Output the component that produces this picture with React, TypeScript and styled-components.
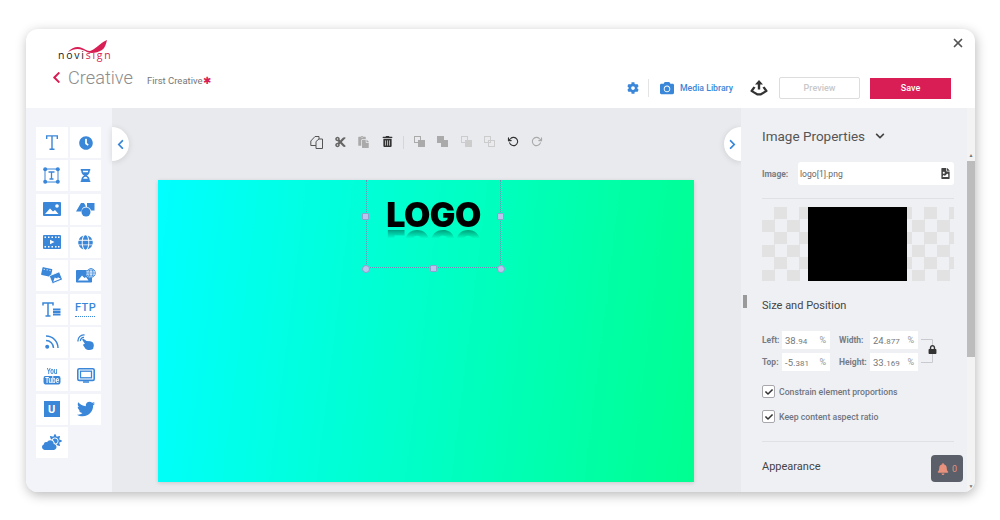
import { createGlobalStyle, styled } from "styled-components";
import {
  FaBell,
  FaCamera,
  FaCheck,
  FaChevronDown,
  FaChevronLeft,
  FaChevronRight,
  FaClock,
  FaCloudSun,
  FaCog,
  FaCut,
  FaFileImage,
  FaGlobe,
  FaHourglassHalf,
  FaLock,
  FaPaste,
  FaTrashAlt,
  FaTwitter,
} from "react-icons/fa";
import { FiRotateCcw, FiRotateCw, FiX } from "react-icons/fi";

const blue = "#3a86d8";

const GlobalStyle = createGlobalStyle`
  html, body {
    margin: 0;
    padding: 0;
    background: #fff;
    font-family: Roboto, "Liberation Sans", sans-serif;
  }
`;

function TextIcon() {
  return (
    <svg width="12" height="15" viewBox="0 0 12 15" fill="none" stroke={blue}>
      <path d="M0.7 4V0.9H11.3V4M6 0.9V14M3.5 14.2H8.5" strokeWidth="1.4" />
    </svg>
  );
}

function TextBoxIcon() {
  return (
    <svg width="17" height="17" viewBox="0 0 17 17" fill="none" stroke={blue}>
      <rect x="2" y="2" width="13" height="13" strokeWidth="1" />
      <path d="M5.5 5H11.5M8.5 5V12M6.5 12H10.5" strokeWidth="1.3" />
      <g fill={blue} stroke="none">
        <circle cx="2.2" cy="2.2" r="2" />
        <circle cx="14.8" cy="2.2" r="2" />
        <circle cx="2.2" cy="14.8" r="2" />
        <circle cx="14.8" cy="14.8" r="2" />
      </g>
    </svg>
  );
}

function PictureIcon() {
  return (
    <svg width="18" height="14" viewBox="0 0 18 14">
      <rect width="18" height="14" rx="1" fill={blue} />
      <path d="M2 12L7 6.5L10 9.5L12 8L15.5 12Z" fill="#fff" />
      <circle cx="14" cy="4" r="1.8" fill="#fff" />
    </svg>
  );
}

function ShapesIcon() {
  return (
    <svg width="19" height="15" viewBox="0 0 19 15" fill={blue}>
      <path d="M0 9.5L5 1H8L10 4.5A5 5 0 0 0 5.5 9.5Z" />
      <circle cx="10" cy="10" r="4.5" />
      <path d="M11 1H18.5V8.5H15.2A6 6 0 0 0 11 4.8Z" />
    </svg>
  );
}

function FilmIcon() {
  return (
    <svg width="18" height="14" viewBox="0 0 18 14">
      <rect width="18" height="14" rx="1" fill={blue} />
      <path
        d="M1.5 1.5H3V3H1.5ZM5 1.5H6.5V3H5ZM8.5 1.5H10V3H8.5ZM12 1.5H13.5V3H12ZM15 1.5H16.5V3H15ZM1.5 11H3V12.5H1.5ZM5 11H6.5V12.5H5ZM8.5 11H10V12.5H8.5ZM12 11H13.5V12.5H12ZM15 11H16.5V12.5H15Z"
        fill="#fff"
      />
      <path d="M7 4.8L11.5 7L7 9.2Z" fill="#fff" />
    </svg>
  );
}

function GalleryIcon() {
  return (
    <svg width="21" height="17" viewBox="0 0 21 17" fill={blue}>
      <g transform="rotate(12 6 6)">
        <rect x="0.5" y="1" width="10" height="8" rx="0.8" />
        <path d="M2 2.5H3V3.5H2ZM5 2.5H6V3.5H5ZM8 2.5H9V3.5H8Z" fill="#fff" />
      </g>
      <g transform="rotate(-22 15 11)">
        <rect x="9.5" y="6.5" width="11" height="8.5" rx="0.8" stroke="#fff" strokeWidth="0.8" />
        <path d="M11 13.5L14 10L16 12L17 11L19 13.5Z" fill="#fff" />
      </g>
    </svg>
  );
}

function WebImageIcon() {
  return (
    <svg width="20" height="15" viewBox="0 0 20 15">
      <rect y="2" width="16" height="12.5" rx="0.8" fill={blue} />
      <path d="M2 12.5L6 7.5L8.5 10L10 9L12.5 12.5Z" fill="#fff" />
      <circle cx="15" cy="5" r="5" fill="#fff" />
      <g fill="none" stroke={blue} strokeWidth="0.8">
        <circle cx="15" cy="5" r="4.4" />
        <ellipse cx="15" cy="5" rx="2" ry="4.4" />
        <path d="M10.6 5H19.4M11.4 2.8H18.6M11.4 7.2H18.6" />
      </g>
    </svg>
  );
}

function TextListIcon() {
  return (
    <svg width="20" height="15" viewBox="0 0 20 15" fill="none" stroke={blue}>
      <path d="M1 3.5V1H11V3.5M6 1V14M3.5 14H8.5" strokeWidth="1.5" />
      <path d="M11 7.5H18.5M11 10H18.5M11 12.5H18.5" strokeWidth="1.8" />
    </svg>
  );
}

function RssIcon() {
  return (
    <svg width="14" height="14" viewBox="0 0 14 14" fill="none" stroke={blue} strokeWidth="1.5">
      <circle cx="2.2" cy="11.8" r="2" fill={blue} stroke="none" />
      <path d="M1 5.5A7.5 7.5 0 0 1 8.5 13" />
      <path d="M1 1A12 12 0 0 1 13 13" />
    </svg>
  );
}

function TouchIcon() {
  return (
    <svg width="17" height="17" viewBox="0 0 17 17">
      <path d="M1 7.5A5.8 5.8 0 0 1 7.5 1" fill="none" stroke={blue} strokeWidth="1.3" />
      <path d="M3.4 7.2A3.4 3.4 0 0 1 7 3.4" fill="none" stroke={blue} strokeWidth="1.3" />
      <path
        d="M5 5.5L6.5 4.8L9.5 7L13 7.2C16 7.6 17 9.5 16.8 12L16 15C13.5 16.5 9.5 16.3 8.3 14.5L6 11L7 9.8L8.2 10.2Z"
        fill={blue}
      />
    </svg>
  );
}

function ScreenIcon() {
  return (
    <svg width="18" height="15" viewBox="0 0 18 15" fill="none" stroke={blue}>
      <rect x="0.8" y="0.8" width="16.4" height="11.6" rx="1.5" strokeWidth="1.6" />
      <rect x="3.5" y="3.2" width="11" height="6.6" strokeWidth="1.3" />
      <path d="M6 14H12" strokeWidth="1.3" />
    </svg>
  );
}

function UploadIcon() {
  return (
    <svg width="18" height="16" viewBox="0 0 18 16" fill="#333">
      <path d="M9 0L13 4.5H10.2V9.5H7.8V4.5H5Z" />
      <path d="M3.5 6.5L0.5 10.5V11.5L7 15.5H11L17.5 11.5V10.5L14.5 6.5L12.5 7.5L14.8 10.8L10.3 13.3H7.7L3.2 10.8L5.5 7.5Z" />
    </svg>
  );
}

function CopyIcon() {
  return (
    <svg width="13" height="13" viewBox="0 0 13 13" fill="none" stroke="#555" strokeWidth="1">
      <path d="M5 0.5H9V3H12.5V12.5H6V9.5H0.8V5Z" />
      <path d="M6 9.5V5.5L9 3" />
    </svg>
  );
}

function ArrangeIcon({ variant }: { variant: number }) {
  const back = variant < 2 ? "#aaa" : "#ccc";
  return (
    <svg width="11" height="11" viewBox="0 0 11 11">
      <rect x="0.5" y="0.5" width="6" height="6" fill={variant === 1 ? back : "none"} stroke={back} />
      <rect x="4.5" y="4.5" width="6" height="6" fill={variant === 3 ? "none" : back} stroke={back} />
    </svg>
  );
}

function LockBracket() {
  return (
    <svg width="12" height="24" viewBox="0 0 12 24" fill="none" stroke="#c8cad0">
      <path d="M0 0.5H11.5V23.5H0" />
    </svg>
  );
}

function Swoosh() {
  return (
    <svg width="54" height="18" viewBox="58 37 54 18">
      <path
        d="M68 51C72 46 78 45 82 47C85 48 87 50 90 50C95 49 100 42 107 39C106 43 105 47 102 49C97 52 91 53 87 51C82 48 76 46 68 51Z"
        fill="#d81e54"
      />
    </svg>
  );
}

function ToolIcons() {
  return (
    <ToolGrid>
      <ToolCell><TextIcon /></ToolCell>
      <ToolCell><FaClock size={14} /></ToolCell>
      <ToolCell><TextBoxIcon /></ToolCell>
      <ToolCell><FaHourglassHalf size={13} /></ToolCell>
      <ToolCell><PictureIcon /></ToolCell>
      <ToolCell><ShapesIcon /></ToolCell>
      <ToolCell><FilmIcon /></ToolCell>
      <ToolCell><FaGlobe size={15} /></ToolCell>
      <ToolCell><GalleryIcon /></ToolCell>
      <ToolCell><WebImageIcon /></ToolCell>
      <ToolCell><TextListIcon /></ToolCell>
      <ToolCell>
        <FtpMark>
          FTP
          <FtpLine />
        </FtpMark>
      </ToolCell>
      <ToolCell><RssIcon /></ToolCell>
      <ToolCell><TouchIcon /></ToolCell>
      <ToolCell>
        <TubeMark>
          You
          <TubeBox>Tube</TubeBox>
        </TubeMark>
      </ToolCell>
      <ToolCell><ScreenIcon /></ToolCell>
      <ToolCell><UBadge>U</UBadge></ToolCell>
      <ToolCell><FaTwitter size={18} /></ToolCell>
      <ToolCell><WeatherIcon size={20} /></ToolCell>
    </ToolGrid>
  );
}

export default function App() {
  return (
    <>
      <GlobalStyle />
      <Page>
        <Window>
          <Header>
            <Brand>
              <LogoMark>
                <Swoosh />
                <LogoText>
                  novi<span>sign</span>
                </LogoText>
              </LogoMark>
              <TitleRow>
                <BackIcon size={13} color="#d81e54" />
                <Title>Creative</Title>
                <DocName>
                  First Creative<em>✱</em>
                </DocName>
              </TitleRow>
            </Brand>
            <HeaderRight>
              <CloseIcon>
                <FiX size={14} />
              </CloseIcon>
              <Actions>
                <FaCog size={12} color={blue} />
                <ActionDivider />
                <FaCamera size={14} color={blue} />
                <MediaLink>Media Library</MediaLink>
                <UploadIcon />
                <PreviewButton>Preview</PreviewButton>
                <SaveButton>Save</SaveButton>
              </Actions>
            </HeaderRight>
          </Header>

          <Body>
            <ToolPanel>
              <ToolIcons />
            </ToolPanel>

            <Workspace>
              <CollapseTab $side="left">
                <FaChevronLeft size={11} />
              </CollapseTab>
              <CollapseTab $side="right">
                <FaChevronRight size={11} />
              </CollapseTab>
              <EditBar>
                <CopyIcon />
                <FaCut size={12} color="#666" />
                <FaPaste size={12} color="#aaa" />
                <FaTrashAlt size={11} color="#333" />
                <BarDivider />
                <ArrangeIcon variant={0} />
                <ArrangeIcon variant={1} />
                <ArrangeIcon variant={2} />
                <ArrangeIcon variant={3} />
                <FiRotateCcw size={11} color="#333" strokeWidth={2.4} />
                <FiRotateCw size={11} color="#aaa" strokeWidth={2.4} />
              </EditBar>
              <Artboard>
                <Selection>
                  <LogoArt>LOGO</LogoArt>
                  <Handle $x="-2px" $y="41%" />
                  <Handle $x="100%" $y="41%" />
                  <Handle $x="calc(50% - 1px)" $y="calc(100% + 1px)" />
                  <Handle $x="-2px" $y="calc(100% + 1px)" $round />
                  <Handle $x="100%" $y="calc(100% + 1px)" $round />
                </Selection>
              </Artboard>
            </Workspace>

            <PropsPanel>
              <GripMark />
              <PropsContent>
                <PanelTitle>
                  Image Properties <FaChevronDown size={10} color="#444" />
                </PanelTitle>
                <ImageRow>
                  <FieldLabel>Image:</FieldLabel>
                  <ImageInput>
                    logo[1].png
                    <FaFileImage size={11} color="#444" />
                  </ImageInput>
                </ImageRow>
                <Rule />
                <Preview>
                  <PreviewImage />
                </Preview>
                <SectionTitle>Size and Position</SectionTitle>
                <SizeGrid>
                  <FieldLabel>Left:</FieldLabel>
                  <NumberBox>
                    <span>
                      38.<small>94</small>
                    </span>
                    <i>%</i>
                  </NumberBox>
                  <WideLabel>Width:</WideLabel>
                  <NumberBox>
                    <span>
                      24.<small>877</small>
                    </span>
                    <i>%</i>
                  </NumberBox>
                  <LockCell>
                    <LockBracket />
                    <LockGlyph>
                      <FaLock size={9} color="#333" />
                    </LockGlyph>
                  </LockCell>
                  <FieldLabel>Top:</FieldLabel>
                  <NumberBox>
                    <span>
                      -5.<small>381</small>
                    </span>
                    <i>%</i>
                  </NumberBox>
                  <WideLabel>Height:</WideLabel>
                  <NumberBox>
                    <span>
                      33.<small>169</small>
                    </span>
                    <i>%</i>
                  </NumberBox>
                </SizeGrid>
                <CheckRow>
                  <CheckBox>
                    <FaCheck size={8} />
                  </CheckBox>
                  Constrain element proportions
                </CheckRow>
                <CheckRow>
                  <CheckBox>
                    <FaCheck size={8} />
                  </CheckBox>
                  Keep content aspect ratio
                </CheckRow>
                <LowerRule />
                <SectionTitle>Appearance</SectionTitle>
                <PeekRow>
                  <PeekField />
                  <PeekField />
                </PeekRow>
              </PropsContent>
              <ScrollBar>
                <ScrollArrow>▲</ScrollArrow>
                <ScrollThumb />
                <ScrollArrow>▼</ScrollArrow>
              </ScrollBar>
              <BellBadge>
                <FaBell size={12} /> 0
              </BellBadge>
            </PropsPanel>
          </Body>
        </Window>
      </Page>
    </>
  );
}

const Page = styled.div`
  width: 1000px;
  height: 520px;
  padding: 29px 25px 28px 26px;
  box-sizing: border-box;
  overflow: hidden;
`;

const Window = styled.div`
  width: 949px;
  height: 463px;
  border-radius: 12px;
  overflow: hidden;
  background: #fff;
  box-shadow: 1px 3px 12px rgba(0, 0, 0, 0.28);
  display: flex;
  flex-direction: column;
`;

const Header = styled.header`
  height: 79px;
  flex: none;
  display: flex;
  justify-content: space-between;
`;

const Brand = styled.div`
  padding: 9px 0 0 26px;
`;

const LogoMark = styled.div`
  position: relative;
  width: 60px;
  height: 23px;
  margin-left: 6px;
`;

const LogoText = styled.div`
  position: absolute;
  left: 0;
  bottom: -1px;
  font-family: "Open Sans", sans-serif;
  font-size: 10.5px;
  font-weight: 400;
  letter-spacing: 1.75px;
  color: #222;

  span {
    color: #d81e54;
  }
`;

const TitleRow = styled.div`
  display: flex;
  align-items: center;
  margin-top: 5px;
  height: 22px;
`;

const BackIcon = styled(FaChevronLeft)`
  margin-left: -2px;
`;

const Title = styled.div`
  margin-left: 5px;
  font-size: 18.2px;
  font-weight: 300;
  color: #8d8d8d;
`;

const DocName = styled.div`
  margin: 6px 0 0 14px;
  font-size: 9.5px;
  color: #777;

  em {
    font-style: normal;
    color: #d81e54;
  }
`;

const HeaderRight = styled.div`
  display: flex;
  flex-direction: column;
  align-items: flex-end;
  padding-right: 24px;
`;

const CloseIcon = styled.div`
  height: 14px;
  margin: 6px -14px 0 0;
  color: #555;

  svg {
    stroke-width: 3;
  }
`;

const Actions = styled.div`
  display: flex;
  align-items: center;
  margin-top: 28px;
  height: 22px;
`;

const ActionDivider = styled.div`
  width: 1px;
  height: 18px;
  margin: 0 11px 0 9px;
  background: #e4e4e4;
`;

const MediaLink = styled.div`
  margin: 0 17px 0 6.5px;
  font-size: 8.7px;
  font-weight: 500;
  color: ${blue};
`;

const PreviewButton = styled.button`
  width: 81px;
  height: 22px;
  margin-left: 11px;
  border: 1px solid #ddd;
  border-radius: 2px;
  background: #fff;
  font: 500 9px Roboto, sans-serif;
  color: #c8c8c8;
`;

const SaveButton = styled.button`
  width: 81px;
  height: 21px;
  margin-left: 10px;
  border: 0;
  background: #d81e54;
  font: 500 9px Roboto, sans-serif;
  color: #fff;
`;

const Body = styled.div`
  flex: 1;
  min-height: 0;
  display: flex;
`;

const ToolPanel = styled.aside`
  width: 86px;
  flex: none;
  padding: 19px 0 0 10px;
  box-sizing: border-box;
  background: #f2f4f9;
`;

const ToolGrid = styled.div`
  display: grid;
  grid-template-columns: 31.5px 31.5px;
  grid-auto-rows: 31px;
  gap: 2.33px;
`;

const ToolCell = styled.div`
  display: flex;
  align-items: center;
  justify-content: center;
  background: #fff;
  color: ${blue};
`;

const WeatherIcon = styled(FaCloudSun)`
  transform: scaleX(-1);
`;

const FtpMark = styled.div`
  font-size: 11px;
  font-weight: 500;
  line-height: 11px;
  letter-spacing: 0.4px;
  text-align: center;
  color: ${blue};
`;

const FtpLine = styled.div`
  width: 20px;
  height: 3px;
  border-bottom: 1px dotted ${blue};
`;

const TubeMark = styled.div`
  display: flex;
  flex-direction: column;
  align-items: center;
  font: 700 7px/7.5px "Liberation Sans", sans-serif;
  color: ${blue};
  transform: scale(0.85, 1.2);
`;

const TubeBox = styled.div`
  padding: 0 2px;
  border-radius: 2px;
  background: ${blue};
  color: #fff;
`;

const UBadge = styled.div`
  width: 16px;
  height: 16px;
  display: flex;
  align-items: center;
  justify-content: center;
  background: ${blue};
  font-size: 11px;
  font-weight: 700;
  color: #fff;
`;

const Workspace = styled.main`
  position: relative;
  flex: 1;
  display: flex;
  flex-direction: column;
  align-items: center;
  background: #e9eaee;
`;

const CollapseTab = styled.div<{ $side: "left" | "right" }>`
  position: absolute;
  top: 19px;
  ${({ $side }) => ($side === "left" ? "left: 0;" : "right: 0;")}
  width: 17px;
  height: 34px;
  display: flex;
  align-items: center;
  justify-content: center;
  border-radius: ${({ $side }) => ($side === "left" ? "0 17px 17px 0" : "17px 0 0 17px")};
  background: #fff;
  box-shadow: 0 1px 6px rgba(0, 0, 0, 0.12);
  color: ${blue};
`;

const EditBar = styled.div`
  height: 72px;
  flex: none;
  display: flex;
  align-items: flex-start;
  padding: 28px 0 0;
  box-sizing: border-box;
  gap: 10.5px;

  & > svg {
    width: 13px;
  }
`;

const BarDivider = styled.div`
  width: 1px;
  height: 13px;
  margin: 0 -1.5px;
  background: #d5d6da;
`;

const Artboard = styled.div`
  position: relative;
  width: 536px;
  height: 302px;
  margin-right: 1px;
  background: linear-gradient(97deg, #00ffff 0%, #00ffc8 50%, #00ff90 100%);
  box-shadow: 0 1px 4px rgba(0, 0, 0, 0.15);
`;

const Selection = styled.div`
  position: absolute;
  left: 208px;
  top: 0;
  width: 135px;
  height: 88px;
  display: flex;
  justify-content: center;
  border: dotted #6f8fb5;
  border-width: 0 1px 1px;
  box-sizing: border-box;
`;

const LogoArt = styled.div`
  height: 30px;
  margin-top: 20px;
  font-family: Inter, Roboto, sans-serif;
  font-size: 34px;
  font-weight: 900;
  line-height: 30px;
  letter-spacing: -0.5px;
  color: #000;
  -webkit-box-reflect: below -3px
    linear-gradient(transparent 62%, rgba(0, 0, 0, 0.5));
`;

const Handle = styled.div<{ $x: string; $y: string; $round?: boolean }>`
  position: absolute;
  left: ${({ $x }) => $x};
  top: ${({ $y }) => $y};
  width: ${({ $round }) => ($round ? "6px" : "5px")};
  height: ${({ $round }) => ($round ? "6px" : "5px")};
  margin: ${({ $round }) => ($round ? "-3.5px" : "-3px")};
  border: 0.5px solid #8f9fd0;
  border-radius: ${({ $round }) => ($round ? "50%" : "1px")};
  background: #b8c6ee;
`;

const PropsPanel = styled.section`
  position: relative;
  width: 234px;
  flex: none;
  display: flex;
  background: #eff0f4;
  overflow: hidden;
`;

const GripMark = styled.div`
  position: absolute;
  left: 2px;
  top: 187px;
  width: 4px;
  height: 13px;
  background: #9a9a9a;
`;

const PropsContent = styled.div`
  flex: 1;
  min-width: 0;
  padding: 19px 13px 0 21px;
`;

const PanelTitle = styled.div`
  display: flex;
  align-items: center;
  gap: 10px;
  height: 17px;
  font-size: 13.5px;
  color: #555;
`;

const ImageRow = styled.div`
  display: flex;
  align-items: center;
  justify-content: space-between;
  margin-top: 18px;
`;

const FieldLabel = styled.div`
  font-size: 8.5px;
  font-weight: 700;
  color: #777c85;
`;

const WideLabel = styled(FieldLabel)`
  padding-left: 9px;
`;

const ImageInput = styled.div`
  width: 156px;
  height: 23px;
  padding: 0 3px 0 2px;
  box-sizing: border-box;
  display: flex;
  align-items: center;
  justify-content: space-between;
  border-radius: 3px;
  background: #fff;
  font-size: 8.6px;
  color: #666;
`;

const Rule = styled.div`
  height: 1px;
  margin-top: 13px;
  background: #e0e1e6;
`;

const Preview = styled.div`
  height: 74px;
  margin-top: 8px;
  display: flex;
  justify-content: center;
  background: repeating-conic-gradient(#e2e2e2 0 25%, transparent 0 50%) 0 0 / 25px 25px;
`;

const PreviewImage = styled.div`
  width: 99px;
  margin-right: 2px;
  background: #000;
`;

const SectionTitle = styled.div`
  margin-top: 18px;
  font-size: 11px;
  line-height: 13px;
  color: #444;
`;

const SizeGrid = styled.div`
  display: grid;
  grid-template-columns: 20px 48px 40px 48px 22px;
  grid-auto-rows: 18px;
  row-gap: 4px;
  align-items: center;
  margin-top: 19px;
`;

const NumberBox = styled.div`
  height: 18px;
  padding: 0 4px 0 3px;
  box-sizing: border-box;
  display: flex;
  align-items: center;
  justify-content: space-between;
  background: #fff;
  font-size: 9.5px;
  color: #777;

  small {
    font-size: 8px;
  }

  i {
    font-style: normal;
    font-size: 9px;
    color: #999;
  }
`;

const LockCell = styled.div`
  position: relative;
  grid-row: span 2;
  display: flex;
  align-items: center;
  height: 24px;
  margin-left: 3px;
`;

const LockGlyph = styled.div`
  position: absolute;
  left: 7px;
  top: 6px;
  height: 9px;
  line-height: 0;
  background: #eff0f4;
`;

const CheckRow = styled.div`
  display: flex;
  align-items: center;
  gap: 4px;
  height: 13px;
  margin-top: 14px;
  font-size: 8.7px;
  font-weight: 500;
  color: #6f7681;

  & + & {
    margin-top: 12px;
  }
`;

const CheckBox = styled.div`
  width: 13px;
  height: 13px;
  box-sizing: border-box;
  display: flex;
  align-items: center;
  justify-content: center;
  border: 1px solid #a8a8ac;
  border-radius: 2px;
  background: #fff;
  color: #333;
`;

const LowerRule = styled(Rule)`
  margin-top: 18px;
`;

const PeekRow = styled.div`
  display: flex;
  gap: 48px;
  margin: 19px 0 0 19px;
`;

const PeekField = styled.div`
  width: 34px;
  height: 8px;
  background: #fff;
`;

const ScrollBar = styled.div`
  width: 8px;
  flex: none;
  display: flex;
  flex-direction: column;
  align-items: center;
  background: #f3f3f3;
  padding-top: 41px;
  box-sizing: border-box;
`;

const ScrollArrow = styled.div`
  font-size: 5px;
  line-height: 12px;
  height: 12px;
  color: #777;
`;

const ScrollThumb = styled.div`
  width: 100%;
  height: 196px;
  margin-bottom: auto;
  background: #bcbcbc;
`;

const BellBadge = styled.div`
  position: absolute;
  left: 190px;
  top: 347px;
  width: 32px;
  height: 27px;
  display: flex;
  align-items: center;
  justify-content: center;
  gap: 3px;
  border-radius: 4px;
  background: #5a5f69;
  font-size: 9px;
  color: #e8917c;
`;
